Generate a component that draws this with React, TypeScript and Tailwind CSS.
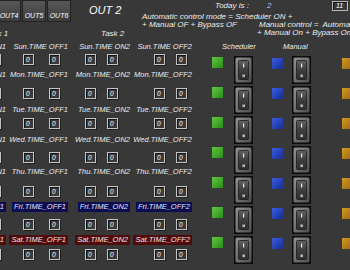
import React from 'react'

type Tone = 'plain' | 'fri' | 'sat'

const days: { d: string; sep: string; tone: Tone; labelMt: string; boxMt: string }[] = [
  { d: 'Sun', sep: ' ', tone: 'plain', labelMt: 'mt-0', boxMt: 'mt-[2px]' },
  { d: 'Mon', sep: '_', tone: 'plain', labelMt: 'mt-[5px]', boxMt: 'mt-[8px]' },
  { d: 'Tue', sep: '_', tone: 'plain', labelMt: 'mt-[6px]', boxMt: 'mt-[3px]' },
  { d: 'Wed', sep: '_', tone: 'plain', labelMt: 'mt-[6px]', boxMt: 'mt-[7px]' },
  { d: 'Thu', sep: '_', tone: 'plain', labelMt: 'mt-[4px]', boxMt: 'mt-[9px]' },
  { d: 'Fri', sep: '_', tone: 'fri', labelMt: 'mt-[5px]', boxMt: 'mt-[7px]' },
  { d: 'Sat', sep: '_', tone: 'sat', labelMt: 'mt-[5px]', boxMt: 'mt-[4px]' },
]

const slots = ['ON1', 'OFF1', 'ON2', 'OFF2']

// padding / gap of the two value boxes in each column
const boxCols = [
  'pl-[19px] gap-[16px]',
  'pl-[17px] gap-[15px]',
  'pl-[17px] gap-[11px]',
  'pl-[24px] gap-[11px]',
]

const toneClass: Record<Tone, string> = {
  plain: 'text-[#ececec]',
  fri: 'bg-[#0c0c50] text-[#e4e6ff] px-[2px]',
  sat: 'bg-[#500c0c] text-[#f6e2e2] px-[2px]',
}

function ValueBox() {
  return (
    <div className="w-[11px] h-[11px] border border-[#c4c4c4] shadow-[inset_1px_1px_0_#161616,1px_1px_0_#202020] bg-[#3a3a3a] text-[6.5px] leading-[9px] pl-[2px] text-white">
      0
    </div>
  )
}

function Switch() {
  return (
    <svg width="19" height="28" viewBox="0 0 19 28" className="block">
      <defs>
        <linearGradient id="bez" x1="0" y1="0" x2="1" y2="1">
          <stop offset="0" stopColor="#929292" />
          <stop offset="1" stopColor="#4e4e4e" />
        </linearGradient>
        <linearGradient id="rock" x1="0" y1="0" x2="0" y2="1">
          <stop offset="0" stopColor="#626262" />
          <stop offset="0.5" stopColor="#3e3e3e" />
          <stop offset="1" stopColor="#2e2e2e" />
        </linearGradient>
      </defs>
      <rect width="19" height="28" fill="#0c0c0c" />
      <rect x="1.5" y="1.5" width="16" height="25" rx="1.5" fill="url(#bez)" />
      <rect x="4.5" y="4.5" width="10" height="19" rx="1" fill="url(#rock)" stroke="#1c1c1c" strokeWidth="0.8" />
      <rect x="9" y="7.5" width="1.2" height="4" fill="#ececec" />
      <rect x="8.4" y="18.5" width="2.6" height="2.6" fill="#b4b4b4" />
    </svg>
  )
}

export default function App() {
  return (
    <div
      className="w-[350px] h-[270px] overflow-hidden bg-[#383838] text-[#ececec] italic text-[7.5px] whitespace-nowrap"
      style={{ fontFamily: '"Liberation Sans", Arial, sans-serif' }}
    >
      {/* Header */}
      <div className="flex h-[42px] text-[8px]">
        <div className="w-[75px] ml-[-3px] shrink-0 flex flex-col">
          <div className="flex gap-px">
            {['OUT4', 'OUT5', 'OUT6'].map((b) => (
              <div
                key={b}
                className="w-[24px] h-[22px] pt-[11px] text-center text-[7px] leading-[8px] text-white bg-gradient-to-b from-[#585858] to-[#3c3c3c] border border-[#242424]"
              >
                {b}
              </div>
            ))}
          </div>
          <div className="mt-[8px] ml-[-12px] leading-[8px]">Task 1</div>
        </div>

        <div className="w-[70px] shrink-0 flex flex-col">
          <div className="mt-[5px] ml-[17px] text-[11px] leading-[11px] text-white">OUT 2</div>
          <div className="mt-[14px] ml-[29px] leading-[8px]">Task 2</div>
        </div>

        <div className="flex-1 flex flex-col">
          <div className="h-[12px] flex items-center">
            <span className="ml-[73px] w-[52px] shrink-0">Today is :</span>
            <span className="w-[6px] shrink-0 text-[#a8c4ff]">2</span>
            <div className="ml-[59px] w-[16px] h-[10px] shrink-0 border border-[#b8b8b8] shadow-[inset_1px_1px_0_#161616] text-[7px] leading-[8px] pl-[3px] text-white">
              11
            </div>
          </div>
          <div className="h-[9px] leading-[9px]">Automatic control mode = Scheduler ON +</div>
          <div className="h-[8px] leading-[8px] flex">
            <span className="w-[117px] shrink-0">+ Manual OF + Bypass OF</span>
            <span>Manual control =&nbsp; Automatic</span>
          </div>
          <div className="h-[8px] leading-[8px] pl-[115px]">+ Manual On + Bypass On</div>
        </div>
      </div>

      <div className="flex">
        {/* Weekly schedule */}
        <div className="ml-[-56px] w-[248px] shrink-0 flex flex-col">
          {days.map((row) => (
            <div key={row.d}>
              <div className={`flex h-[10px] leading-[10px] ${row.labelMt}`}>
                {slots.map((s) => (
                  <div key={s} className="w-[62px] flex justify-end">
                    <span className={toneClass[row.tone]}>
                      {row.d}.TIME{row.sep}
                      {s}
                    </span>
                  </div>
                ))}
              </div>
              <div className={`flex h-[11px] ${row.boxMt}`}>
                {boxCols.map((c, i) => (
                  <div key={i} className={`w-[62px] flex ${c}`}>
                    <ValueBox />
                    <ValueBox />
                  </div>
                ))}
              </div>
            </div>
          ))}
        </div>

        {/* Scheduler / Manual */}
        <div className="ml-[20px] flex flex-col">
          <div className="h-[10px] leading-[10px] flex">
            <span className="ml-[10px] w-[61px]">Scheduler</span>
            <span>Manual</span>
          </div>
          <div className="mt-[4px] flex flex-col gap-[2px]">
            {days.map((row) => (
              <div key={row.d} className="flex items-start h-[28px]">
                <div className="mt-[1px] w-[11px] h-[11px] shrink-0 bg-gradient-to-br from-[#62c840] to-[#2a8c18]" />
                <div className="ml-[11px] shrink-0">
                  <Switch />
                </div>
                <div className="mt-[2px] ml-[19px] w-[11px] h-[11px] shrink-0 bg-gradient-to-br from-[#3c5ee0] to-[#182c96]" />
                <div className="ml-[9px] shrink-0">
                  <Switch />
                </div>
                <div className="mt-[2px] ml-[31px] w-[11px] h-[11px] shrink-0 bg-gradient-to-br from-[#d49a22] to-[#9c6810]" />
              </div>
            ))}
          </div>
        </div>
      </div>
    </div>
  )
}
